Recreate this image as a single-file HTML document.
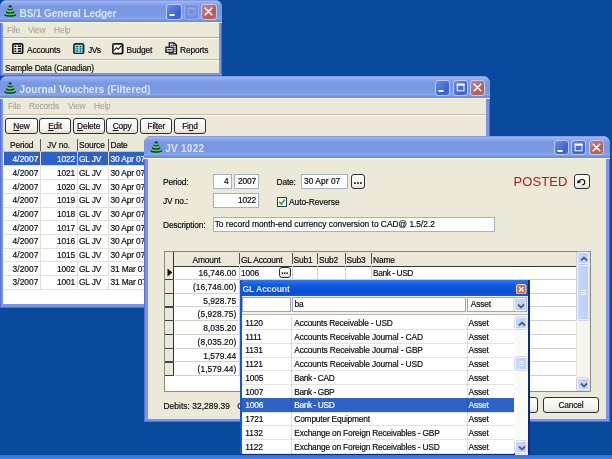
<!DOCTYPE html>
<html><head><meta charset="utf-8">
<style>
*{box-sizing:border-box;margin:0;padding:0}
html,body{width:612px;height:459px;overflow:hidden}
body{background:#0a4a9c;font-family:"Liberation Sans",sans-serif;font-size:8.4px;letter-spacing:-0.15px;color:#0c0c0c;position:relative;-webkit-text-stroke:0.18px currentColor}
.a,.win,.tb,.t,.fld,.btn,.wb,.ln,.tt,svg{position:absolute}
.win{background:#ece9d8;border:3px solid #7c94e5;outline:1.2px solid #5570d2;outline-offset:-1.2px;border-top:none;border-radius:7px 7px 0 0}
.tb{left:-4px;right:-4px;top:0;height:22px;border-radius:7px 7px 0 0;box-shadow:0 1px 0 #f5f4ec;
 background:linear-gradient(to bottom,#7a92e2 0,#9db4f1 1.5px,#87a3ea 4px,#7a97e2 7px,#7a9ae3 16px,#83a8eb 18.5px,#758fdc 20.5px,#7089d9 22px)}
.tt{left:16.5px;top:5.6px;font-weight:bold;font-size:10px;letter-spacing:0;color:#dce6fb;-webkit-text-stroke:0;white-space:nowrap;line-height:16px}
.t{white-space:nowrap;line-height:10px}
.r{text-align:right}
.menu{color:#a8a595;-webkit-text-stroke:0.08px currentColor}
.wb{width:15.4px;height:15.4px;top:4.4px;border:1px solid #bccbf5;border-radius:3px;background:linear-gradient(135deg,#6a8ee8,#3d62d0 70%,#4a6fd8)}
.wb.x{background:linear-gradient(135deg,#cd8583,#b25c5c 70%,#b86868)}
.wb.dis{background:#7391e0;border-color:#95acec}
.btn{border:1.2px solid #2a3242;border-radius:3px;background:linear-gradient(to bottom,#fefefc,#f3f1e8 75%,#dedbce);text-align:center;line-height:14.3px;height:15.8px;white-space:nowrap}
.fld{background:#fdfdfb;border:1px solid #a6b1c2;height:15px;line-height:13.8px;white-space:nowrap;overflow:hidden;padding:0 2px}
u{text-decoration:underline}
</style></head><body>

<div class="a" style="left:0;top:452px;width:612px;height:3.4px;background:linear-gradient(to bottom,#0a4a9c,#0b4793)"></div><div class="a" style="left:0;top:455.3px;width:612px;height:3.7px;background:linear-gradient(to bottom,#3373dd,#3e81ea)"></div>
<div class="win" style="left:0;top:0;width:221.5px;height:76px"><div class="tb" style="left:-3px;right:-3px"></div><div class="a" style="left:0;top:0;width:215.5px;height:73px">
<svg style="left:1.4px;top:4.3px" width="12.8" height="13.4" viewBox="0 0 13 13" preserveAspectRatio="none"><ellipse cx="6.3" cy="10.6" rx="6" ry="1.7" fill="#0c3b2c"/><ellipse cx="6.3" cy="9.6" rx="5.2" ry="1.3" fill="#55c560"/><ellipse cx="6.3" cy="7.8" rx="4.3" ry="1.5" fill="#0c3b2c"/><ellipse cx="6.3" cy="6.9" rx="3.6" ry="1.1" fill="#6fd878"/><ellipse cx="6.3" cy="5.1" rx="2.9" ry="1.3" fill="#0c3b2c"/><ellipse cx="6.3" cy="4.3" rx="2.2" ry="0.9" fill="#58c866"/><ellipse cx="6.3" cy="2.3" rx="1.5" ry="1.2" fill="#12354a"/></svg>
<div class="tt" style="letter-spacing:-0.08px">BS/1 General Ledger</div>
<div class="wb" style="left:163.3px"><svg width="13" height="13" viewBox="0 0 13 13" style="left:0;top:0"><rect x="2.6" y="9" width="5" height="2" fill="#fff"/></svg></div><div class="wb dis" style="left:180.8px"><svg width="13" height="13" viewBox="0 0 13 13" style="left:0;top:0"><rect x="3.2" y="3.2" width="6.8" height="6.6" fill="none" stroke="#8fa6ea" stroke-width="1"/><rect x="2.7" y="2.7" width="7.8" height="1.6" fill="#8fa6ea"/></svg></div><div class="wb x" style="left:198.4px"><svg width="13" height="13" viewBox="0 0 13 13" style="left:0;top:0"><path d="M3.2 3.2L9.8 9.8M9.8 3.2L3.2 9.8" stroke="#fff" stroke-width="1.6" stroke-linecap="round"/></svg></div>
<div class="t menu" style="left:4px;top:24.5px;">File</div>
<div class="t menu" style="left:25px;top:24.5px;">View</div>
<div class="t menu" style="left:51px;top:24.5px;">Help</div>
<div class="ln" style="left:0;right:0;top:37px;height:1px;background:#b5b2a2"></div><div class="ln" style="left:0;right:0;top:38px;height:1px;background:#fbfaf4"></div>
<svg style="left:9px;top:43.2px" width="11.5" height="11.3" viewBox="0 0 12 12" preserveAspectRatio="none"><rect x="0.9" y="0.9" width="10.2" height="10.2" rx="1.2" fill="#fdfdfd" stroke="#101010" stroke-width="1.7"/><path d="M2.6 3.4h1.9M6 3.4h3.6M2.6 6.05h1.9M6 6.05h3.6M2.6 8.7h1.9M6 8.7h3.6" stroke="#000" stroke-width="1.55"/></svg>
<div class="t " style="left:24px;top:45px;">Accounts</div>
<svg style="left:70px;top:43.2px" width="11.5" height="11.3" viewBox="0 0 12 12" preserveAspectRatio="none"><rect x="0.9" y="0.9" width="10.2" height="10.2" rx="1.6" fill="#93e0e3" stroke="#0f2c33" stroke-width="1.7"/><path d="M4.3 1.5v9M7.7 1.5v9M1.5 3.8h9M1.5 6.1h9M1.5 8.4h9" stroke="#4fb2bb" stroke-width="0.8"/><g fill="#0c2a32"><circle cx="4.3" cy="3.8" r=".6"/><circle cx="7.7" cy="3.8" r=".6"/><circle cx="4.3" cy="6.1" r=".6"/><circle cx="7.7" cy="6.1" r=".6"/><circle cx="4.3" cy="8.4" r=".6"/><circle cx="7.7" cy="8.4" r=".6"/><circle cx="2" cy="3.8" r=".5"/><circle cx="2" cy="6.1" r=".5"/><circle cx="2" cy="8.4" r=".5"/><circle cx="10" cy="3.8" r=".5"/><circle cx="10" cy="6.1" r=".5"/><circle cx="10" cy="8.4" r=".5"/></g></svg>
<div class="t " style="left:85px;top:45px;letter-spacing:-0.5px">JVs</div>
<svg style="left:109px;top:43px" width="11.6" height="11.6" viewBox="0 0 12 12" preserveAspectRatio="none"><rect x="0.9" y="0.9" width="10.2" height="10.2" rx="1.2" fill="#fbfbf8" stroke="#1c1c1c" stroke-width="1.7"/><path d="M10.6 2v8.6H2" stroke="#111" stroke-width="1" fill="none"/><path d="M1.8 7.8L4.6 5l1.8 1.5L10 2.6" stroke="#222" stroke-width="1.2" fill="none"/></svg>
<div class="t " style="left:123.5px;top:45px;">Budget</div>
<svg style="left:162.3px;top:42.3px" width="13" height="12.6" viewBox="0 0 14 13" preserveAspectRatio="none"><path d="M4.6 0.8h5l2.8 2.7v8.7h-7.8z" fill="#f6f6f2" stroke="#111" stroke-width="1.3"/><path d="M9.4 0.9v2.9h2.9" stroke="#111" stroke-width="0.9" fill="none"/><path d="M6.2 3.4h2M10 6h1.6M9.6 8h2M10 10h1.6" stroke="#222" stroke-width="1"/><rect x="1" y="5.4" width="7.8" height="5.2" fill="#efefea" stroke="#111" stroke-width="1.3"/><path d="M2.6 8h4.6" stroke="#111" stroke-width="1.1"/><path d="M0.3 8.9h1.5" stroke="#111" stroke-width="1"/></svg>
<div class="t " style="left:177px;top:45px;">Reports</div>
<div class="ln" style="left:0;right:0;top:59px;height:1px;background:#bdb9a8"></div><div class="ln" style="left:0;right:0;top:60px;height:1px;background:#f8f7f0"></div>
<div class="t " style="left:2px;top:62.5px;">Sample Data (Canadian)</div>
</div></div>
<div class="win" style="left:0;top:76px;width:489.7px;height:231.5px;border-right-width:4px;border-bottom-width:4px"><div class="tb" style="left:-3px"></div><div class="a" style="left:0;top:0;width:483px;height:228px">
<svg style="left:1.4px;top:5.1px" width="12.8" height="13.4" viewBox="0 0 13 13" preserveAspectRatio="none"><ellipse cx="6.3" cy="10.6" rx="6" ry="1.7" fill="#0c3b2c"/><ellipse cx="6.3" cy="9.6" rx="5.2" ry="1.3" fill="#55c560"/><ellipse cx="6.3" cy="7.8" rx="4.3" ry="1.5" fill="#0c3b2c"/><ellipse cx="6.3" cy="6.9" rx="3.6" ry="1.1" fill="#6fd878"/><ellipse cx="6.3" cy="5.1" rx="2.9" ry="1.3" fill="#0c3b2c"/><ellipse cx="6.3" cy="4.3" rx="2.2" ry="0.9" fill="#58c866"/><ellipse cx="6.3" cy="2.3" rx="1.5" ry="1.2" fill="#12354a"/></svg>
<div class="tt" style="letter-spacing:0.07px">Journal Vouchers (Filtered)</div>
<div class="wb" style="left:432px"><svg width="13" height="13" viewBox="0 0 13 13" style="left:0;top:0"><rect x="2.6" y="9" width="5" height="2" fill="#fff"/></svg></div><div class="wb" style="left:449.5px"><svg width="13" height="13" viewBox="0 0 13 13" style="left:0;top:0"><rect x="3.2" y="3.2" width="6.8" height="6.6" fill="none" stroke="#fff" stroke-width="1"/><rect x="2.7" y="2.7" width="7.8" height="2" fill="#fff"/></svg></div><div class="wb x" style="left:467px"><svg width="13" height="13" viewBox="0 0 13 13" style="left:0;top:0"><path d="M3.2 3.2L9.8 9.8M9.8 3.2L3.2 9.8" stroke="#fff" stroke-width="1.6" stroke-linecap="round"/></svg></div>
<div class="t menu" style="left:5px;top:25px;">File</div>
<div class="t menu" style="left:26px;top:25px;">Records</div>
<div class="t menu" style="left:65px;top:25px;">View</div>
<div class="t menu" style="left:91px;top:25px;">Help</div>
<div class="ln" style="left:0;right:0;top:37.5px;height:1px;background:#c2bfae"></div><div class="ln" style="left:0;right:0;top:38.5px;height:1px;background:#fbfaf4"></div>
<div class="btn" style="left:2.3px;top:41.8px;width:32.3px"><u>N</u>ew</div>
<div class="btn" style="left:36.3px;top:41.8px;width:31.5px"><u>E</u>dit</div>
<div class="btn" style="left:69.5px;top:41.8px;width:32.3px"><u>D</u>elete</div>
<div class="btn" style="left:103px;top:41.8px;width:32.3px"><u>C</u>opy</div>
<div class="btn" style="left:137.3px;top:41.8px;width:32px">Fil<u>t</u>er</div>
<div class="btn" style="left:171px;top:41.8px;width:32px">Fi<u>n</u>d</div>
<div class="a" style="left:0.4px;top:61.5px;width:482.5px;height:166px;background:#fff;border-top:1px solid #9a988a"></div>
<div class="a" style="left:0.4px;top:62px;width:482.5px;height:13.8px;background:#ebe8da;border-bottom:1.5px solid #c8c5b4"></div>
<div class="a" style="left:37px;top:62.5px;width:1.1px;height:12.5px;background:#5a584f"></div>
<div class="a" style="left:74px;top:62.5px;width:1.1px;height:12.5px;background:#5a584f"></div>
<div class="a" style="left:105.2px;top:62.5px;width:1.1px;height:12.5px;background:#5a584f"></div>
<div class="t " style="left:7px;top:64px;">Period</div>
<div class="t " style="left:44px;top:64px;">JV no.</div>
<div class="t " style="left:76px;top:64px;">Source</div>
<div class="t " style="left:107.5px;top:64px;">Date</div>
<div class="a" style="left:1.2px;top:75.9px;width:481.7px;height:13.71px;background:#2f62c8"></div>
<div class="a" style="left:1px;top:89.41px;width:481px;height:1px;background:#e3e1d9"></div>
<div class="t r" style="left:1px;top:78.1px;width:34.5px;color:#fff;letter-spacing:0.05px;">4/2007</div>
<div class="t r" style="left:38px;top:78.1px;width:34px;color:#fff;">1022</div>
<div class="t " style="left:76px;top:78.1px;color:#fff;">GL JV</div>
<div class="t " style="left:107.5px;top:78.1px;color:#fff;">30 Apr 07</div>
<div class="a" style="left:1px;top:103.12px;width:481px;height:1px;background:#e3e1d9"></div>
<div class="t r" style="left:1px;top:91.81px;width:34.5px;letter-spacing:0.05px;">4/2007</div>
<div class="t r" style="left:38px;top:91.81px;width:34px;">1021</div>
<div class="t " style="left:76px;top:91.81px;">GL JV</div>
<div class="t " style="left:107.5px;top:91.81px;">30 Apr 07</div>
<div class="a" style="left:1px;top:116.83px;width:481px;height:1px;background:#e3e1d9"></div>
<div class="t r" style="left:1px;top:105.52px;width:34.5px;letter-spacing:0.05px;">4/2007</div>
<div class="t r" style="left:38px;top:105.52px;width:34px;">1020</div>
<div class="t " style="left:76px;top:105.52px;">GL JV</div>
<div class="t " style="left:107.5px;top:105.52px;">30 Apr 07</div>
<div class="a" style="left:1px;top:130.54px;width:481px;height:1px;background:#e3e1d9"></div>
<div class="t r" style="left:1px;top:119.23px;width:34.5px;letter-spacing:0.05px;">4/2007</div>
<div class="t r" style="left:38px;top:119.23px;width:34px;">1019</div>
<div class="t " style="left:76px;top:119.23px;">GL JV</div>
<div class="t " style="left:107.5px;top:119.23px;">30 Apr 07</div>
<div class="a" style="left:1px;top:144.25px;width:481px;height:1px;background:#e3e1d9"></div>
<div class="t r" style="left:1px;top:132.94px;width:34.5px;letter-spacing:0.05px;">4/2007</div>
<div class="t r" style="left:38px;top:132.94px;width:34px;">1018</div>
<div class="t " style="left:76px;top:132.94px;">GL JV</div>
<div class="t " style="left:107.5px;top:132.94px;">30 Apr 07</div>
<div class="a" style="left:1px;top:157.96px;width:481px;height:1px;background:#e3e1d9"></div>
<div class="t r" style="left:1px;top:146.65px;width:34.5px;letter-spacing:0.05px;">4/2007</div>
<div class="t r" style="left:38px;top:146.65px;width:34px;">1017</div>
<div class="t " style="left:76px;top:146.65px;">GL JV</div>
<div class="t " style="left:107.5px;top:146.65px;">30 Apr 07</div>
<div class="a" style="left:1px;top:171.67px;width:481px;height:1px;background:#e3e1d9"></div>
<div class="t r" style="left:1px;top:160.36px;width:34.5px;letter-spacing:0.05px;">4/2007</div>
<div class="t r" style="left:38px;top:160.36px;width:34px;">1016</div>
<div class="t " style="left:76px;top:160.36px;">GL JV</div>
<div class="t " style="left:107.5px;top:160.36px;">30 Apr 07</div>
<div class="a" style="left:1px;top:185.38px;width:481px;height:1px;background:#e3e1d9"></div>
<div class="t r" style="left:1px;top:174.07px;width:34.5px;letter-spacing:0.05px;">4/2007</div>
<div class="t r" style="left:38px;top:174.07px;width:34px;">1015</div>
<div class="t " style="left:76px;top:174.07px;">GL JV</div>
<div class="t " style="left:107.5px;top:174.07px;">30 Apr 07</div>
<div class="a" style="left:1px;top:199.09px;width:481px;height:1px;background:#e3e1d9"></div>
<div class="t r" style="left:1px;top:187.78px;width:34.5px;letter-spacing:0.05px;">3/2007</div>
<div class="t r" style="left:38px;top:187.78px;width:34px;">1002</div>
<div class="t " style="left:76px;top:187.78px;">GL JV</div>
<div class="t " style="left:107.5px;top:187.78px;">31 Mar 07</div>
<div class="a" style="left:1px;top:212.80px;width:481px;height:1px;background:#e3e1d9"></div>
<div class="t r" style="left:1px;top:201.49px;width:34.5px;letter-spacing:0.05px;">3/2007</div>
<div class="t r" style="left:38px;top:201.49px;width:34px;">1001</div>
<div class="t " style="left:76px;top:201.49px;">GL JV</div>
<div class="t " style="left:107.5px;top:201.49px;">31 Mar 07</div>
<div class="a" style="left:37px;top:75.9px;width:1px;height:137.1px;background:#e3e1d9"></div>
<div class="a" style="left:74px;top:75.9px;width:1px;height:137.1px;background:#e3e1d9"></div>
<div class="a" style="left:105.2px;top:75.9px;width:1px;height:137.1px;background:#e3e1d9"></div>
</div></div>
<div class="win" style="left:144px;top:135.6px;width:465.7px;height:286.4px;border-right-width:4px;border-left-width:4px"><div class="tb"></div>
<svg style="left:2.2px;top:4.8px" width="12.8" height="13.4" viewBox="0 0 13 13" preserveAspectRatio="none"><ellipse cx="6.3" cy="10.6" rx="6" ry="1.7" fill="#0c3b2c"/><ellipse cx="6.3" cy="9.6" rx="5.2" ry="1.3" fill="#55c560"/><ellipse cx="6.3" cy="7.8" rx="4.3" ry="1.5" fill="#0c3b2c"/><ellipse cx="6.3" cy="6.9" rx="3.6" ry="1.1" fill="#6fd878"/><ellipse cx="6.3" cy="5.1" rx="2.9" ry="1.3" fill="#0c3b2c"/><ellipse cx="6.3" cy="4.3" rx="2.2" ry="0.9" fill="#58c866"/><ellipse cx="6.3" cy="2.3" rx="1.5" ry="1.2" fill="#12354a"/></svg>
<div class="tt" style="left:17.3px;letter-spacing:0.25px">JV 1022</div>
<div class="wb" style="left:405.6px"><svg width="13" height="13" viewBox="0 0 13 13" style="left:0;top:0"><rect x="2.6" y="9" width="5" height="2" fill="#fff"/></svg></div><div class="wb" style="left:423px"><svg width="13" height="13" viewBox="0 0 13 13" style="left:0;top:0"><rect x="3.2" y="3.2" width="6.8" height="6.6" fill="none" stroke="#fff" stroke-width="1"/><rect x="2.7" y="2.7" width="7.8" height="2" fill="#fff"/></svg></div><div class="wb x" style="left:440.5px"><svg width="13" height="13" viewBox="0 0 13 13" style="left:0;top:0"><path d="M3.2 3.2L9.8 9.8M9.8 3.2L3.2 9.8" stroke="#fff" stroke-width="1.6" stroke-linecap="round"/></svg></div>
<div class="t " style="left:15px;top:41.4px;">Period:</div>
<div class="t " style="left:15px;top:60.0px;">JV no.:</div>
<div class="t " style="left:15px;top:84.4px;">Description:</div>
<div class="fld r" style="left:65px;top:38.7px;width:18.5px">4</div>
<div class="fld r" style="left:85.5px;top:38.7px;width:25.5px">2007</div>
<div class="t " style="left:128.5px;top:41.4px;">Date:</div>
<div class="fld" style="left:153px;top:38.7px;width:46.5px;letter-spacing:0.05px">30 Apr 07</div>
<div class="btn" style="left:202.5px;top:38.9px;width:14.8px;height:15px;font-weight:bold;font-size:10px;line-height:12px;letter-spacing:0.2px">...</div>
<div class="fld r" style="left:65px;top:57.1px;width:46px">1022</div>
<svg style="left:128.5px;top:61.1px" width="10" height="10" viewBox="0 0 10 10"><rect x="0.5" y="0.5" width="9" height="9" fill="#f6f6f2" stroke="#24425c" stroke-width="1"/><path d="M2.3 4.8L4.2 7 7.8 2.6" stroke="#2f9c2f" stroke-width="1.5" fill="none"/></svg>
<div class="t " style="left:141px;top:61.7px;letter-spacing:-0.05px">Auto-Reverse</div>
<div class="fld" style="left:65px;top:81.1px;width:281.5px;letter-spacing:0;padding-left:0.7px">To record month-end currency conversion to CAD@ 1.5/2.2</div>
<div class="t" style="left:365.5px;top:38.4px;font-size:13px;line-height:15px;color:#a51f26;letter-spacing:0.1px;-webkit-text-stroke:0">POSTED</div>
<div class="btn" style="left:426px;top:38.5px;width:15.5px;height:15px;border-color:#2e3038;border-width:1.2px"><svg style="left:1.3px;top:1.5px" width="11" height="10" viewBox="0 0 11 10"><path d="M3.4 5.2A2.7 2.7 0 1 1 6.2 7.9" stroke="#111" stroke-width="1.2" fill="none"/><path d="M1.2 6.6L1.6 2.9 5.1 5.2z" fill="#111"/></svg></div>
<div class="a" style="left:15.7px;top:115.7px;width:427.3px;height:140.5px;background:#fff;border:1px solid #8d8b80"></div>
<div class="a" style="left:16.7px;top:116.7px;width:411px;height:14.3px;background:#ebe8da;border-bottom:1.3px solid #33332f"></div>
<div class="a" style="left:16.7px;top:116.7px;width:9.5px;height:124px;background:#ebe8da;border-right:1.3px solid #33332f"></div>
<div class="a" style="left:90.5px;top:117.7px;width:1px;height:11px;background:#55534b"></div>
<div class="a" style="left:143.5px;top:117.7px;width:1px;height:11px;background:#55534b"></div>
<div class="a" style="left:169px;top:117.7px;width:1px;height:11px;background:#55534b"></div>
<div class="a" style="left:196.5px;top:117.7px;width:1px;height:11px;background:#55534b"></div>
<div class="a" style="left:223px;top:117.7px;width:1px;height:11px;background:#55534b"></div>
<div class="t " style="left:26px;top:119.4px;width:65px;text-align:center">Amount</div>
<div class="t " style="left:93px;top:119.4px;">GL Account</div>
<div class="t " style="left:145.5px;top:119.4px;">Sub1</div>
<div class="t " style="left:171px;top:119.4px;">Sub2</div>
<div class="t " style="left:198.5px;top:119.4px;">Sub3</div>
<div class="t " style="left:225px;top:119.4px;">Name</div>
<div class="a" style="left:26.7px;top:143.40px;width:402px;height:1px;background:#d4d2c8"></div>
<div class="a" style="left:16.7px;top:143.40px;width:9.5px;height:1.2px;background:#44433d"></div>
<div class="t r" style="left:27px;top:132.6px;width:61.3px;letter-spacing:0.05px">16,746.00</div>
<div class="a" style="left:26.7px;top:157.12px;width:402px;height:1px;background:#d4d2c8"></div>
<div class="a" style="left:16.7px;top:157.12px;width:9.5px;height:1.2px;background:#44433d"></div>
<div class="t r" style="left:27px;top:146.32px;width:61.3px;letter-spacing:0.05px">(16,746.00)</div>
<div class="a" style="left:26.7px;top:170.84px;width:402px;height:1px;background:#d4d2c8"></div>
<div class="a" style="left:16.7px;top:170.84px;width:9.5px;height:1.2px;background:#44433d"></div>
<div class="t r" style="left:27px;top:160.04px;width:61.3px;letter-spacing:0.05px">5,928.75</div>
<div class="a" style="left:26.7px;top:184.56px;width:402px;height:1px;background:#d4d2c8"></div>
<div class="a" style="left:16.7px;top:184.56px;width:9.5px;height:1.2px;background:#44433d"></div>
<div class="t r" style="left:27px;top:173.76px;width:61.3px;letter-spacing:0.05px">(5,928.75)</div>
<div class="a" style="left:26.7px;top:198.28px;width:402px;height:1px;background:#d4d2c8"></div>
<div class="a" style="left:16.7px;top:198.28px;width:9.5px;height:1.2px;background:#44433d"></div>
<div class="t r" style="left:27px;top:187.48px;width:61.3px;letter-spacing:0.05px">8,035.20</div>
<div class="a" style="left:26.7px;top:212.00px;width:402px;height:1px;background:#d4d2c8"></div>
<div class="a" style="left:16.7px;top:212.00px;width:9.5px;height:1.2px;background:#44433d"></div>
<div class="t r" style="left:27px;top:201.2px;width:61.3px;letter-spacing:0.05px">(8,035.20)</div>
<div class="a" style="left:26.7px;top:225.72px;width:402px;height:1px;background:#d4d2c8"></div>
<div class="a" style="left:16.7px;top:225.72px;width:9.5px;height:1.2px;background:#44433d"></div>
<div class="t r" style="left:27px;top:214.92px;width:61.3px;letter-spacing:0.05px">1,579.44</div>
<div class="a" style="left:26.7px;top:239.44px;width:402px;height:1px;background:#d4d2c8"></div>
<div class="a" style="left:16.7px;top:239.44px;width:9.5px;height:1.2px;background:#44433d"></div>
<div class="t r" style="left:27px;top:228.64px;width:61.3px;letter-spacing:0.05px">(1,579.44)</div>
<div class="a" style="left:90.5px;top:130.4px;width:1px;height:109.8px;background:#d4d2c8"></div>
<div class="a" style="left:143.5px;top:130.4px;width:1px;height:109.8px;background:#d4d2c8"></div>
<div class="a" style="left:169px;top:130.4px;width:1px;height:109.8px;background:#d4d2c8"></div>
<div class="a" style="left:196.5px;top:130.4px;width:1px;height:109.8px;background:#d4d2c8"></div>
<div class="a" style="left:223px;top:130.4px;width:1px;height:109.8px;background:#d4d2c8"></div>
<svg style="left:18.5px;top:132.9px" width="6" height="9" viewBox="0 0 6 9"><path d="M0.5 0.5L5.3 4.5 0.5 8.5z" fill="#111"/></svg>
<div class="t " style="left:93px;top:132.6px;">1006</div>
<div class="t " style="left:225px;top:132.6px;letter-spacing:-0.38px;word-spacing:-0.2px">Bank - USD</div>
<div class="btn" style="left:130.5px;top:131.4px;width:12.5px;height:11.5px;line-height:7px;font-weight:bold;letter-spacing:0">...</div>
<div class="a" style="left:428.4px;top:116.7px;width:13.6px;height:138.5px;background:#f6f5f0;border-left:1px solid #e6e4da"></div>
<div class="a" style="left:429.09999999999997px;top:116.5px;width:12.4px;height:12px;background:linear-gradient(to right,#c9d7fb,#bccdf7);border:1px solid #eef2fd;border-radius:2px;box-shadow:0 0 0 0.5px #aab9e0"><svg style="left:0;top:0" width="12" height="12" viewBox="0 0 12 12"><path d="M3 7.5L6 4.5l3 3" stroke="#4d6185" stroke-width="1.8" fill="none"/></svg></div>
<div class="a" style="left:429.09999999999997px;top:129.2px;width:12.4px;height:55.5px;background:linear-gradient(to right,#c9d7fb,#bccdf7);border:1px solid #eef2fd;border-radius:2px;box-shadow:0 0 0 0.5px #aab9e0"><div class="a" style="left:3px;top:24px;width:5px;height:1px;background:#eef3ff;box-shadow:0 2px #eef3ff,0 4px #eef3ff"></div></div>
<div class="a" style="left:429.09999999999997px;top:242.4px;width:12.4px;height:12px;background:linear-gradient(to right,#c9d7fb,#bccdf7);border:1px solid #eef2fd;border-radius:2px;box-shadow:0 0 0 0.5px #aab9e0"><svg style="left:0;top:0" width="12" height="12" viewBox="0 0 12 12"><path d="M3 4.5L6 7.5l3-3" stroke="#4d6185" stroke-width="1.8" fill="none"/></svg></div>
<div class="t " style="left:15.5px;top:265.4px;letter-spacing:0.05px">Debits: 32,289.39</div>
<div class="t " style="left:89.3px;top:265.4px;letter-spacing:0.05px">Credits: 32,289.39</div>
<div class="a" style="left:0;right:0;bottom:0;height:1.4px;background:#e3e5f3"></div>
<div class="btn" style="left:334px;top:261.7px;width:55.5px">OK</div>
<div class="btn" style="left:395px;top:261.7px;width:56px">Cancel</div>
</div>
<div class="a" style="left:240px;top:280.3px;width:290px;height:174.9px;background:#fff;border-left:2px solid #1556d6;border-right:2px solid #0c2a8c;border-bottom:2px solid #0c2a8c">
<div class="a" style="left:0;top:0;right:0;height:15.3px;background:linear-gradient(to bottom,#2c7af2,#1058dc 35%,#0b4fd2 75%,#1258da)"></div>
<div class="t" style="left:0.5px;top:3.4px;font-weight:bold;font-size:8.6px;letter-spacing:-0.1px;color:#e2ecff;-webkit-text-stroke:0">GL Account</div>
<svg style="left:274px;top:3.4px" width="10.5" height="10.5" viewBox="0 0 10.5 10.5"><rect x="0.5" y="0.5" width="9.5" height="9.5" rx="1.5" fill="#d8664e" stroke="#f4e6e0" stroke-width="1"/><path d="M3 3l4.5 4.5M7.5 3L3 7.5" stroke="#fff" stroke-width="1.4"/></svg>
<div class="a" style="left:0;top:15.3px;right:0;height:19px;background:#f3f2ec"></div>
<div class="fld" style="left:0.3px;top:16.8px;width:48.5px;height:15.2px;border-color:#9ba6b6"></div>
<div class="fld" style="left:50.3px;top:16.8px;width:174.2px;height:15.2px;padding-left:1.2px;border-color:#9ba6b6">ba</div>
<div class="fld" style="left:224.8px;top:16.8px;width:60px;height:15.2px;padding-left:3px;border-color:#9ba6b6">Asset</div>
<div class="a" style="left:272.3px;top:17.8px;width:11.5px;height:13.2px;background:linear-gradient(to right,#c9d7fb,#bccdf7);border:1px solid #eef2fd;border-radius:2px;box-shadow:0 0 0 0.5px #aab9e0"><svg style="left:-0.5px;top:0.5px" width="12" height="12" viewBox="0 0 12 12"><path d="M3 4.5L6 7.5l3-3" stroke="#4d6185" stroke-width="1.8" fill="none"/></svg></div>
<div class="a" style="left:0;top:33.9px;width:286px;height:1px;background:#b9b7ad"></div>
<div class="a" style="left:0;top:48.85px;width:272px;height:1px;background:#e4e3dc"></div>
<div class="t " style="left:3.3px;top:37.7px;">1120</div>
<div class="t " style="left:52.3px;top:37.7px;letter-spacing:-0.2px;">Accounts Receivable - USD</div>
<div class="t " style="left:226.5px;top:37.7px;">Asset</div>
<div class="a" style="left:0;top:62.60px;width:272px;height:1px;background:#e4e3dc"></div>
<div class="t " style="left:3.3px;top:51.45px;">1111</div>
<div class="t " style="left:52.3px;top:51.45px;letter-spacing:-0.14px;">Accounts Receivable Journal - CAD</div>
<div class="t " style="left:226.5px;top:51.45px;">Asset</div>
<div class="a" style="left:0;top:76.35px;width:272px;height:1px;background:#e4e3dc"></div>
<div class="t " style="left:3.3px;top:65.2px;">1131</div>
<div class="t " style="left:52.3px;top:65.2px;letter-spacing:-0.14px;">Accounts Receivable Journal - GBP</div>
<div class="t " style="left:226.5px;top:65.2px;">Asset</div>
<div class="a" style="left:0;top:90.10px;width:272px;height:1px;background:#e4e3dc"></div>
<div class="t " style="left:3.3px;top:78.95px;">1121</div>
<div class="t " style="left:52.3px;top:78.95px;letter-spacing:-0.14px;">Accounts Receivable Journal - USD</div>
<div class="t " style="left:226.5px;top:78.95px;">Asset</div>
<div class="a" style="left:0;top:103.85px;width:272px;height:1px;background:#e4e3dc"></div>
<div class="t " style="left:3.3px;top:92.7px;">1005</div>
<div class="t " style="left:52.3px;top:92.7px;letter-spacing:-0.38px;word-spacing:-0.2px;">Bank - CAD</div>
<div class="t " style="left:226.5px;top:92.7px;">Asset</div>
<div class="a" style="left:0;top:117.60px;width:272px;height:1px;background:#e4e3dc"></div>
<div class="t " style="left:3.3px;top:106.45px;">1007</div>
<div class="t " style="left:52.3px;top:106.45px;letter-spacing:-0.38px;word-spacing:-0.2px;">Bank - GBP</div>
<div class="t " style="left:226.5px;top:106.45px;">Asset</div>
<div class="a" style="left:0;top:118.10px;width:272px;height:13.75px;background:#2f62c8"></div>
<div class="a" style="left:0;top:131.35px;width:272px;height:1px;background:#e4e3dc"></div>
<div class="t " style="left:3.3px;top:120.2px;color:#fff;">1006</div>
<div class="t " style="left:52.3px;top:120.2px;color:#fff;letter-spacing:-0.38px;word-spacing:-0.2px;">Bank - USD</div>
<div class="t " style="left:226.5px;top:120.2px;color:#fff;">Asset</div>
<div class="a" style="left:0;top:145.10px;width:272px;height:1px;background:#e4e3dc"></div>
<div class="t " style="left:3.3px;top:133.95px;">1721</div>
<div class="t " style="left:52.3px;top:133.95px;letter-spacing:-0.2px;">Computer Equipment</div>
<div class="t " style="left:226.5px;top:133.95px;">Asset</div>
<div class="a" style="left:0;top:158.85px;width:272px;height:1px;background:#e4e3dc"></div>
<div class="t " style="left:3.3px;top:147.7px;">1132</div>
<div class="t " style="left:52.3px;top:147.7px;letter-spacing:-0.2px;">Exchange on Foreign Receivables - GBP</div>
<div class="t " style="left:226.5px;top:147.7px;">Asset</div>
<div class="a" style="left:0;top:172.60px;width:272px;height:1px;background:#e4e3dc"></div>
<div class="t " style="left:3.3px;top:161.45px;">1122</div>
<div class="t " style="left:52.3px;top:161.45px;letter-spacing:-0.2px;">Exchange on Foreign Receivables - USD</div>
<div class="t " style="left:226.5px;top:161.45px;">Asset</div>
<div class="a" style="left:48.6px;top:35.9px;width:1px;height:137.5px;background:#e0dfd8;mix-blend-mode:multiply"></div>
<div class="a" style="left:224.5px;top:35.9px;width:1px;height:137.5px;background:#e0dfd8;mix-blend-mode:multiply"></div>
<div class="a" style="left:272.5px;top:35.9px;width:13.5px;height:138.5px;background:#fafaf6"></div>
<div class="a" style="left:273.3px;top:36.4px;width:12px;height:12px;background:linear-gradient(to right,#c9d7fb,#bccdf7);border:1px solid #eef2fd;border-radius:2px;box-shadow:0 0 0 0.5px #aab9e0"><svg style="left:0;top:0" width="12" height="12" viewBox="0 0 12 12"><path d="M3 7.5L6 4.5l3 3" stroke="#4d6185" stroke-width="1.8" fill="none"/></svg></div>
<div class="a" style="left:273.3px;top:77.2px;width:12px;height:12.5px;background:linear-gradient(to right,#c9d7fb,#bccdf7);border:1px solid #eef2fd;border-radius:2px;box-shadow:0 0 0 0.5px #aab9e0"><div class="a" style="left:3px;top:3px;width:5px;height:1px;background:#eef3ff;box-shadow:0 2px #eef3ff,0 4px #eef3ff"></div></div>
<div class="a" style="left:273.3px;top:160.6px;width:12px;height:12px;background:linear-gradient(to right,#c9d7fb,#bccdf7);border:1px solid #eef2fd;border-radius:2px;box-shadow:0 0 0 0.5px #aab9e0"><svg style="left:0;top:0" width="12" height="12" viewBox="0 0 12 12"><path d="M3 4.5L6 7.5l3-3" stroke="#4d6185" stroke-width="1.8" fill="none"/></svg></div>
</div>
</body></html>
